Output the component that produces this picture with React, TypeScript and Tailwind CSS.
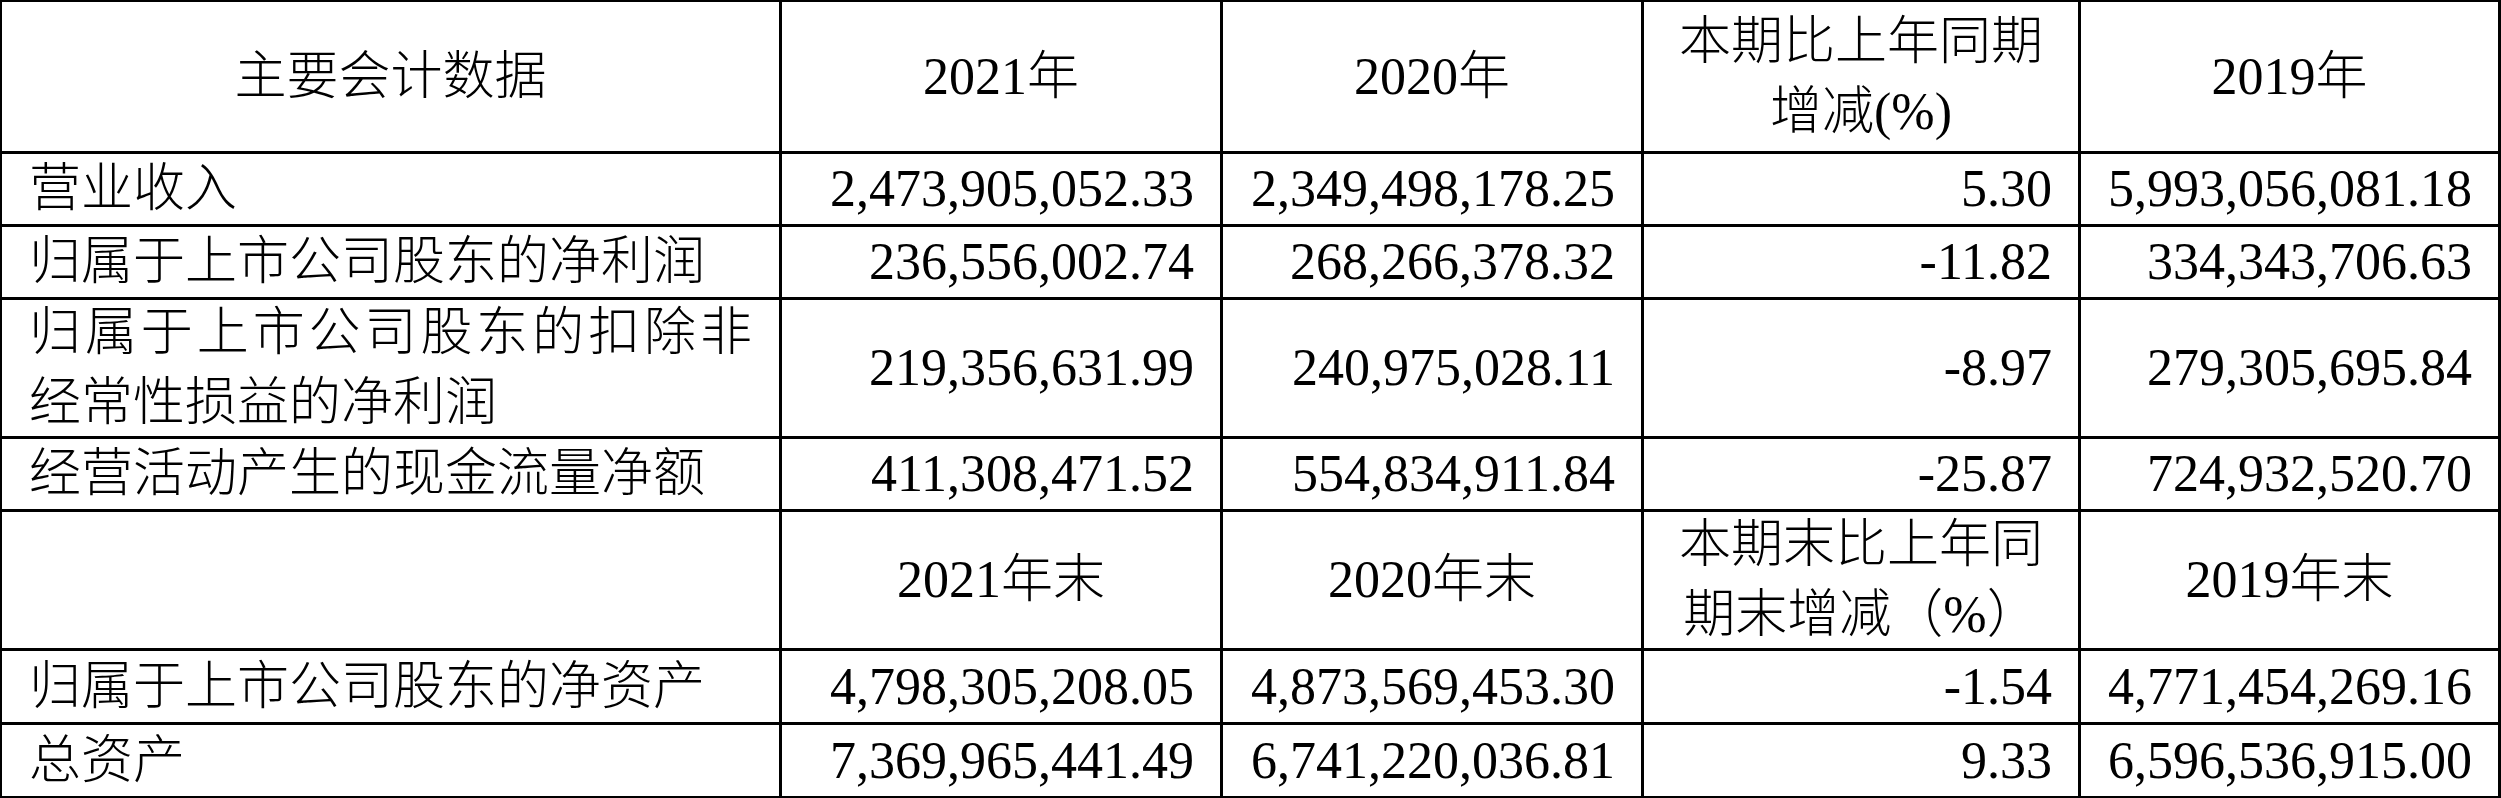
import React from "react";

const cellBase =
  "bg-white flex items-center text-[52px] leading-[70px] text-black";

function L({ children }: { children: React.ReactNode }) {
  return (
    <div className={cellBase + " justify-start pl-[27px] whitespace-nowrap"}>
      <span>{children}</span>
    </div>
  );
}

function LJ({ children }: { children: React.ReactNode }) {
  return (
    <div className={cellBase + " pl-[27px] pr-[27px]"}>
      <p className="w-full text-justify">{children}</p>
    </div>
  );
}

function N({ children }: { children: React.ReactNode }) {
  return (
    <div className={cellBase + " justify-end pr-[26px] whitespace-nowrap"}>
      <span>{children}</span>
    </div>
  );
}

function H({ children }: { children?: React.ReactNode }) {
  return (
    <div className={cellBase + " justify-center text-center whitespace-nowrap"}>
      <span>{children}</span>
    </div>
  );
}

export default function App() {
  return (
    <div className="font-['Liberation_Serif','Noto_Sans_CJK_SC',serif] font-light grid w-[2501px] h-[798px] bg-black pt-[2px] pl-[2px] pr-[3px] pb-[2px] gap-[3px] grid-cols-[777px_438px_418px_434px_417px] grid-rows-[149px_70px_70px_136px_70px_136px_71px_71px]">
      <H>主要会计数据</H>
      <H>2021年</H>
      <H>2020年</H>
      <H>
        本期比上年同期
        <br />
        增减(%)
      </H>
      <H>2019年</H>

      <L>营业收入</L>
      <N>2,473,905,052.33</N>
      <N>2,349,498,178.25</N>
      <N>5.30</N>
      <N>5,993,056,081.18</N>

      <L>归属于上市公司股东的净利润</L>
      <N>236,556,002.74</N>
      <N>268,266,378.32</N>
      <N>-11.82</N>
      <N>334,343,706.63</N>

      <LJ>归属于上市公司股东的扣除非经常性损益的净利润</LJ>
      <N>219,356,631.99</N>
      <N>240,975,028.11</N>
      <N>-8.97</N>
      <N>279,305,695.84</N>

      <L>经营活动产生的现金流量净额</L>
      <N>411,308,471.52</N>
      <N>554,834,911.84</N>
      <N>-25.87</N>
      <N>724,932,520.70</N>

      <H></H>
      <H>2021年末</H>
      <H>2020年末</H>
      <H>
        本期末比上年同
        <br />
        期末增减（%）
      </H>
      <H>2019年末</H>

      <L>归属于上市公司股东的净资产</L>
      <N>4,798,305,208.05</N>
      <N>4,873,569,453.30</N>
      <N>-1.54</N>
      <N>4,771,454,269.16</N>

      <L>总资产</L>
      <N>7,369,965,441.49</N>
      <N>6,741,220,036.81</N>
      <N>9.33</N>
      <N>6,596,536,915.00</N>
    </div>
  );
}
